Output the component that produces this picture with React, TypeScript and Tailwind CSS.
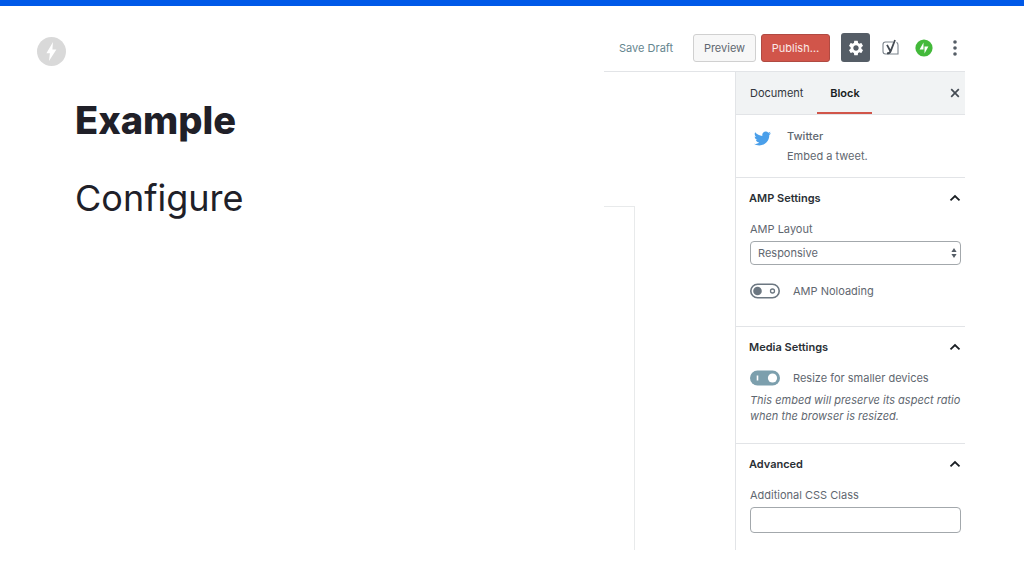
import { useState } from "react";
import type { ReactNode } from "react";
import { FaTwitter } from "react-icons/fa";
import { MdSettings } from "react-icons/md";

export default function App() {
  return (
    <div className="min-h-screen border-t-6 border-[#0059e8] bg-white font-['Inter',sans-serif]">
      <main className="flex justify-between pt-[18px] pr-[59px] pl-[37px]">
        {/* Slide text */}
        <div className="pt-[13px]">
          <BoltLogo />
          <h1 className="mt-[30px] pl-[38px] text-[38px] leading-12 font-extrabold text-[#202028]">Example</h1>
          <p className="mt-[30px] pl-[38px] text-[36px] leading-12 text-[#202028]">Configure</p>
        </div>

        <Editor />
      </main>
    </div>
  );
}

function Editor() {
  return (
    <div className="flex w-[361px] flex-col text-[11px] leading-4 text-[#5f6770]">
      <Toolbar />
      <div className="flex">
        {/* Edge of the post canvas */}
        <div className="flex flex-1 pt-[134px]">
          <div className="w-[31px] border-t border-r border-[#e8eaeb]" />
        </div>
        <Sidebar />
      </div>
    </div>
  );
}

function Toolbar() {
  return (
    <header className="flex h-12 items-center border-b border-[#e2e4e7] pl-[15px]">
      <button type="button" className="text-[#66868f]">
        Save Draft
      </button>
      <button
        type="button"
        className="ml-auto h-7 w-[63px] rounded-[3px] border border-[#d0d0d0] bg-[#f7f7f7]"
      >
        Preview
      </button>
      <button
        type="button"
        className="ml-[5px] h-7 w-[69px] rounded-[3px] border border-[#b04a42] bg-[#d1554a] text-[#fbe9e7]"
      >
        Publish…
      </button>
      <button
        type="button"
        aria-label="Settings"
        className="ml-[11px] flex size-[29px] items-center justify-center rounded-[3px] bg-[#555d66] text-white"
      >
        <MdSettings size={18} />
      </button>
      <button type="button" aria-label="Yoast SEO" className="ml-3">
        <YoastIcon />
      </button>
      <button type="button" aria-label="Jetpack" className="ml-4">
        <JetpackIcon />
      </button>
      <button type="button" aria-label="More" className="mr-1 ml-4">
        <svg width="12" height="16" viewBox="0 0 12 16" fill="#555d66">
          <circle cx="6" cy="2" r="1.8" />
          <circle cx="6" cy="8" r="1.8" />
          <circle cx="6" cy="14" r="1.8" />
        </svg>
      </button>
    </header>
  );
}

function Sidebar() {
  return (
    <aside className="w-[230px] border-l border-[#e2e4e7]">
      <div className="flex h-[43px] border-b border-[#e2e4e7] bg-[#f1f3f4] text-[#32373c]">
        <button type="button" className="px-[14px]">
          Document
        </button>
        <button
          type="button"
          className="w-[55px] border-y-2 border-t-transparent border-b-[#d1554a] font-semibold text-[#191e23]"
        >
          Block
        </button>
        <button type="button" aria-label="Close settings" className="mr-[5px] ml-auto">
          <svg width="10" height="10" viewBox="0 0 10 10" fill="none" stroke="#444b53" strokeWidth="1.7">
            <path d="M1.2 1.2l7.600 7.600M8.800 1.200L1.200 8.800" />
          </svg>
        </button>
      </div>

      {/* Selected block */}
      <div className="flex gap-4 border-b border-[#e2e4e7] pt-[11px] pb-[11px] pl-[18px]">
        <FaTwitter size={17} className="mt-1 text-[#4a9fea]" />
        <div className="leading-5">
          <h2 className="font-medium">Twitter</h2>
          <p>Embed a tweet.</p>
        </div>
      </div>

      <Panel title="AMP Settings">
        <label htmlFor="amp-layout" className="block">
          AMP Layout
        </label>
        <div className="relative mt-1">
          <select
            id="amp-layout"
            defaultValue="responsive"
            className="h-6 w-full appearance-none rounded-[4px] border border-[#a3a8ac] bg-white px-[7px]"
          >
            <option value="responsive">Responsive</option>
            <option value="fixed">Fixed</option>
            <option value="fill">Fill</option>
          </select>
          <svg
            className="pointer-events-none absolute top-[7px] right-1"
            width="6"
            height="10"
            viewBox="0 0 6 10"
            fill="#555d66"
          >
            <path d="M3 0l2.6 4H.4zM3 10l2.6-4H.4z" />
          </svg>
        </div>
        <div className="mt-[18px] mb-[27px]">
          <Toggle label="AMP Noloading" />
        </div>
      </Panel>

      <Panel title="Media Settings">
        <Toggle label="Resize for smaller devices" defaultChecked />
        <p className="mt-[6px] mb-[19px] whitespace-nowrap italic">
          This embed will preserve its aspect ratio
          <br />
          when the browser is resized.
        </p>
      </Panel>

      <Panel title="Advanced" last>
        <label htmlFor="css-class" className="block">
          Additional CSS Class
        </label>
        <input
          id="css-class"
          type="text"
          className="mt-1 mb-[17px] block h-[26px] w-full rounded-[4px] border border-[#a3a8ac] px-[7px]"
        />
      </Panel>
    </aside>
  );
}

function Panel({ title, last = false, children }: { title: string; last?: boolean; children: ReactNode }) {
  const [open, setOpen] = useState(true);

  return (
    <section className={last ? "pr-1 pl-[13px]" : "border-b border-[#e2e4e7] pr-1 pl-[13px]"}>
      <h2>
        <button
          type="button"
          aria-expanded={open}
          onClick={() => setOpen(!open)}
          className="flex h-[39px] w-full items-center justify-between font-semibold text-[#2a2f35]"
        >
          {title}
          <svg
            className={open ? "" : "rotate-180"}
            width="12"
            height="8"
            viewBox="0 0 12 8"
            fill="none"
            stroke="#191e23"
            strokeWidth="1.8"
          >
            <path d="M1.5 6.3L6 2l4.5 4.3" />
          </svg>
        </button>
      </h2>
      {open && <div className="flow-root pt-1 pl-px">{children}</div>}
    </section>
  );
}

function Toggle({ label, defaultChecked = false }: { label: string; defaultChecked?: boolean }) {
  const [on, setOn] = useState(defaultChecked);

  return (
    <label className="relative flex items-center gap-[13px]">
      <input type="checkbox" className="sr-only" checked={on} onChange={() => setOn(!on)} />
      {on ? (
        <svg width="30" height="16" viewBox="0 0 30 16">
          <rect y=".5" width="30" height="15" rx="7.5" fill="#7c9fad" />
          <circle cx="22.5" cy="8" r="4.6" fill="#fff" />
          <path d="M7.5 5.5v5" stroke="#fff" strokeWidth="1.6" />
        </svg>
      ) : (
        <svg width="30" height="16" viewBox="0 0 30 16" fill="none" stroke="#6c7781">
          <rect x=".8" y="1.2" width="28.4" height="13.6" rx="6.8" fill="#fff" strokeWidth="1.6" />
          <circle cx="7.5" cy="8" r="4.3" fill="#6c7781" stroke="none" />
          <circle cx="22.5" cy="8" r="2" strokeWidth="1.3" />
        </svg>
      )}
      {label}
    </label>
  );
}

function BoltLogo() {
  return (
    <svg width="29" height="29" viewBox="0 0 29 29" aria-label="AMP" role="img">
      <circle cx="14.5" cy="14.5" r="14.5" fill="#d9d9d9" />
      <path d="M16 5L9.4 16.2h3.500l-.900 7.800L19.400 12.600h-4z" fill="#fff" />
    </svg>
  );
}

function YoastIcon() {
  return (
    <svg width="17" height="18" viewBox="0 0 17 18" fill="none" stroke="#7b848c">
      <path d="M11 3H3.5Q1 3 1 5.5v7Q1 15 3.5 15H16V6q0-2-1.500-2.800" strokeWidth="1.100" />
      <path d="M5 5.800l3.300 6.200M13 1L8.800 11.800Q7.800 14.400 5 14.400" stroke="#444b53" strokeWidth="1.800" />
    </svg>
  );
}

function JetpackIcon() {
  return (
    <svg width="18" height="18" viewBox="0 0 18 18">
      <circle cx="9" cy="9" r="8.6" fill="#43b93a" />
      <path d="M8.500 3.500v6.900H4.600zM9.500 14.500V7.600h3.900z" fill="#fff" />
    </svg>
  );
}
